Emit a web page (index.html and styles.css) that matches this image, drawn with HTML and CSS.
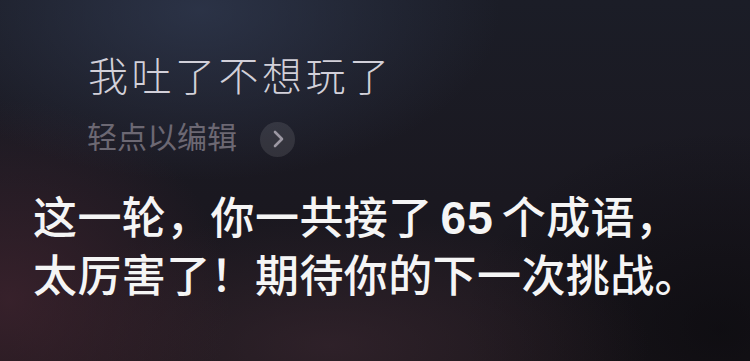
FILE: index.html
```html
<!DOCTYPE html>
<html lang="zh-CN">
<head>
<meta charset="utf-8">
<title>Siri</title>
<link rel="stylesheet" href="styles.css">
</head>
<body>
<main class="screen">
  <section class="query">
    <p class="query-text">我吐了不想玩了</p>
    <div class="edit-row">
      <span class="edit-label">轻点以编辑</span>
      <span class="chevron-btn">
        <svg viewBox="0 0 34 34" width="34" height="34" aria-hidden="true">
          <path d="M14 10 L21 17 L14 24" fill="none" stroke="#9c98a3" stroke-width="2.6" stroke-linecap="round" stroke-linejoin="round"/>
        </svg>
      </span>
    </div>
  </section>
  <section class="answer">
    <p class="answer-line">这一轮，你一共接了<span class="num">65</span>个成语，</p>
    <p class="answer-line">太厉害了！期待你的下一次挑战。</p>
  </section>
</main>
</body>
</html>
```

FILE: styles.css
```css
html, body {
  margin: 0;
  padding: 0;
  width: 750px;
  height: 361px;
  overflow: hidden;
}

body {
  background-color: #17171e;
  background-image:
    radial-gradient(ellipse 300px 170px at 200px 10px, rgba(50, 60, 84, 0.7), rgba(50, 60, 84, 0) 100%),
    radial-gradient(ellipse 220px 200px at 10px 300px, rgba(70, 38, 50, 0.65), rgba(70, 38, 50, 0) 100%),
    radial-gradient(ellipse 320px 130px at 330px 345px, rgba(60, 40, 50, 0.6), rgba(60, 40, 50, 0) 100%),
    radial-gradient(ellipse 260px 200px at 720px 330px, rgba(8, 8, 12, 0.6), rgba(8, 8, 12, 0) 100%),
    linear-gradient(180deg, #1b1d27 0%, #1a1820 55%, #1a161b 100%);
  font-family: "Noto Sans CJK SC", "Noto Sans", sans-serif;
}

.screen {
  display: flex;
  flex-direction: column;
}

.query {
  display: flex;
  flex-direction: column;
  padding: 54px 0 0 88px;
  gap: 26px;
}

.query-text {
  margin: 0;
  font-size: 40px;
  line-height: 40px;
  font-weight: 300;
  letter-spacing: 3.5px;
  color: #d2d0d9;
}

.edit-row {
  display: flex;
  align-items: center;
  gap: 23px;
  height: 30px;
}

.edit-label {
  font-size: 30px;
  line-height: 30px;
  font-weight: 400;
  color: #6c6873;
  margin-left: -1px;
}

.chevron-btn {
  display: flex;
  align-items: center;
  justify-content: center;
  width: 35px;
  height: 35px;
  border-radius: 50%;
  background: rgba(255, 255, 255, 0.1);
  margin-top: 8px;
}

.answer {
  display: flex;
  flex-direction: column;
  padding: 38px 0 0 33px;
}

.answer-line {
  margin: 0;
  font-size: 44px;
  line-height: 55px;
  font-weight: 500;
  letter-spacing: 0.4px;
  color: #f5f5f5;
  white-space: nowrap;
}

.num {
  font-family: "Liberation Sans", "Noto Sans", sans-serif;
  font-weight: 700;
  font-size: 46px;
  letter-spacing: 1px;
  margin: 0 8px;
}
```
